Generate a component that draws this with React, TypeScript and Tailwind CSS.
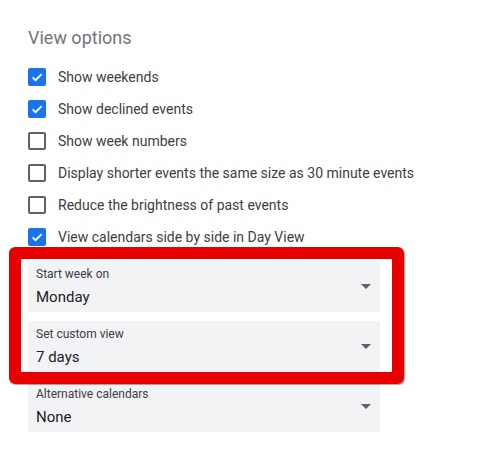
import React from "react";

function Check({ checked }: { checked: boolean }) {
  if (checked) {
    return (
      <div className="w-[18px] h-[18px] rounded-[2px] bg-[#1a73e8] flex items-center justify-center shrink-0">
        <svg width="14" height="14" viewBox="0 0 24 24">
          <path d="M4.5 12.5l5 5L20 7" fill="none" stroke="#fff" strokeWidth="3" />
        </svg>
      </div>
    );
  }
  return <div className="w-[18px] h-[18px] rounded-[2px] border-2 border-[#5f6368] shrink-0" />;
}

function Field({ label, value }: { label: string; value: string }) {
  return (
    <div className="w-[352px] h-[51px] rounded-[4px] bg-[#f1f3f4] flex items-center pl-2 pr-[9px]">
      <div className="flex-1 self-start pt-[5px]">
        <div className="text-[12px] leading-4 text-[#3c4043]">{label}</div>
        <div className="text-[15px] leading-6 mt-[3px] text-[#202124]">{value}</div>
      </div>
      <svg width="10" height="5" viewBox="0 0 10 5">
        <path d="M0 0h10L5 5z" fill="#5f6368" />
      </svg>
    </div>
  );
}

export default function App() {
  const rows: [string, boolean][] = [
    ["Show weekends", true],
    ["Show declined events", true],
    ["Show week numbers", false],
    ["Display shorter events the same size as 30 minute events", false],
    ["Reduce the brightness of past events", false],
    ["View calendars side by side in Day View", true],
  ];
  return (
    <div
      className="relative w-[492px] h-[467px] bg-white pl-[28px] pt-[26px]"
      style={{ fontFamily: "Roboto, 'Noto Sans', sans-serif" }}
    >
      <div className="text-[18px] leading-6 text-[#70757a]">View options</div>
      <div className="mt-[11px] flex flex-col">
        {rows.map(([t, c]) => (
          <div key={t} className="h-8 flex items-center gap-3">
            <Check checked={c} />
            <span className="text-[14px] text-[#3c4043]">{t}</span>
          </div>
        ))}
      </div>
      <div className="mt-[8px] flex flex-col gap-[9px]">
        <Field label="Start week on" value="Monday" />
        <Field label="Set custom view" value="7 days" />
        <Field label="Alternative calendars" value="None" />
      </div>
      <div className="absolute left-[9px] top-[247px] w-[395px] h-[137px] border-[12px] border-[#e60000] rounded-[6px] shadow-[1px_1px_1px_rgba(0,0,0,0.35)]" />
    </div>
  );
}
